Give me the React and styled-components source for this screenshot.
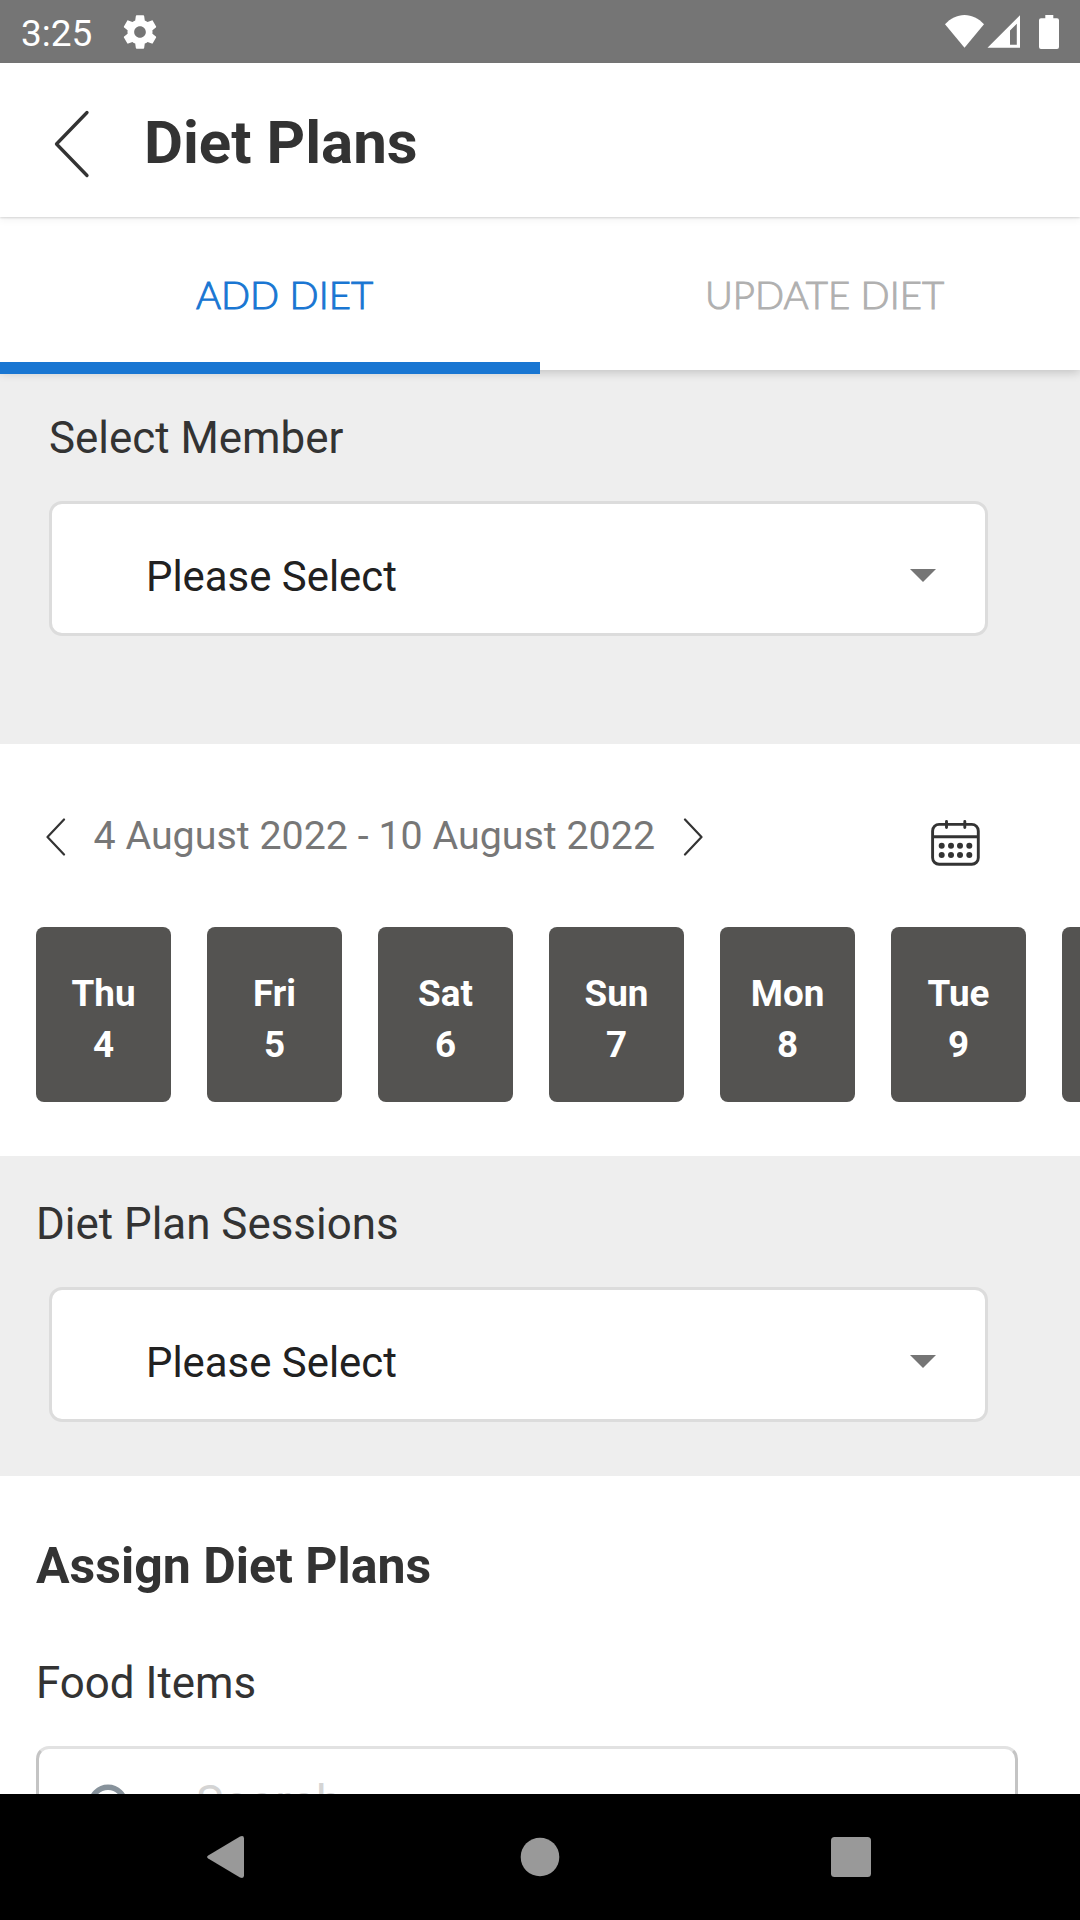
import styled, { createGlobalStyle } from "styled-components";

const days = [
	{ name: "Thu", date: 4 },
	{ name: "Fri", date: 5 },
	{ name: "Sat", date: 6 },
	{ name: "Sun", date: 7 },
	{ name: "Mon", date: 8 },
	{ name: "Tue", date: 9 },
	{ name: "Wed", date: 10 },
];

const dotColumns = [10.7, 20, 29, 38.3];
const dotRows = [25.7, 35];

const Select = () => (
	<SelectBox>
		<SelectText>Please Select</SelectText>
		<Arrow width="26" height="13" viewBox="0 0 26 13">
			<path d="M0 0h26L13 13z" fill="#757575" />
		</Arrow>
	</SelectBox>
);

const StatusIcons = () => (
	<svg width="116" height="36" viewBox="944 13 116 36" fill="#fff">
		<path d="M964.5 46.8 945 23.2C950.5 17.5 957 14 964.5 14S978.5 17.5 984 23.2z" />
		<path
			fillRule="evenodd"
			d="M987.5 46.8 1020 14.3V46.8zM1010 29.5V43.7H1016.8V22.7z"
		/>
		<path d="M1045.3 14h8v3.2h3.7a2 2 0 0 1 2 2V46a2 2 0 0 1-2 2h-16a2 2 0 0 1-2-2V19.2a2 2 0 0 1 2-2h4.3z" />
	</svg>
);

const CalendarIcon = () => (
	<svg width="49" height="47" viewBox="0 0 49 47" fill="none" stroke="#333" strokeWidth="2.9">
		<rect x="1.6" y="4.4" width="45.7" height="39.9" rx="6.5" />
		<path d="M1.6 16.7H47.3" />
		<path d="M15.5 1.5V7.5M33.8 1.5V7.5" strokeLinecap="round" />
		{dotRows.map((y) =>
			dotColumns.map((x) => (
				<circle key={`${x}-${y}`} cx={x} cy={y} r="3" fill="#333" stroke="none" />
			))
		)}
	</svg>
);

const App = () => {
	return (
		<Screen>
			<GlobalStyle />
			<StatusBar>
				<Clock>3:25</Clock>
				<svg width="40" height="40" viewBox="0 0 24 24" fill="#fff">
					<path d="M19.43 12.98c.04-.32.07-.64.07-.98s-.03-.66-.07-.98l2.11-1.65c.19-.15.24-.42.12-.64l-2-3.46c-.12-.22-.39-.3-.61-.22l-2.49 1c-.52-.4-1.08-.73-1.69-.98l-.38-2.65C14.46 2.18 14.25 2 14 2h-4c-.25 0-.46.18-.49.42l-.38 2.65c-.61.25-1.17.59-1.69.98l-2.49-1c-.23-.09-.49 0-.61.22l-2 3.46c-.13.22-.07.49.12.64l2.11 1.65c-.04.32-.07.65-.07.98s.03.66.07.98l-2.11 1.65c-.19.15-.24.42-.12.64l2 3.46c.12.22.39.3.61.22l2.49-1c.52.4 1.08.73 1.69.98l.38 2.65c.03.24.24.42.49.42h4c.25 0 .46-.18.49-.42l.38-2.65c.61-.25 1.17-.59 1.69-.98l2.49 1c.23.09.49 0 .61-.22l2-3.46c.12-.22.07-.49-.12-.64l-2.11-1.65zM12 15.5c-1.93 0-3.5-1.57-3.5-3.5s1.57-3.5 3.5-3.5 3.5 1.57 3.5 3.5-1.57 3.5-3.5 3.5z" />
				</svg>
				<StatusRight>
					<StatusIcons />
				</StatusRight>
			</StatusBar>

			<Header>
				<svg width="36" height="70" viewBox="0 0 36 70" fill="none" stroke="#333">
					<path d="M33 3.5 2.5 35 33 66.5" strokeWidth="3.3" strokeLinecap="round" strokeLinejoin="round" />
				</svg>
				<h1>Diet Plans</h1>
			</Header>

			<Tabs>
				<Tab $active>ADD DIET</Tab>
				<Tab>UPDATE DIET</Tab>
			</Tabs>

			<Content>
				<GraySection $bottom={108}>
					<Label $indent={49}>Select Member</Label>
					<Select />
				</GraySection>

				<WeekSection>
					<DateRow>
						<Chevron width="21" height="38" viewBox="0 0 21 38">
							<path d="M19 1.5 2.5 19 19 36.5" />
						</Chevron>
						<DateRange>4 August 2022 - 10 August 2022</DateRange>
						<Chevron width="21" height="38" viewBox="0 0 21 38">
							<path d="M2 1.5 18.5 19 2 36.5" />
						</Chevron>
						<CalendarButton>
							<CalendarIcon />
						</CalendarButton>
					</DateRow>
					<DayList>
						{days.map((day) => (
							<Day key={day.date}>
								<span>{day.name}</span>
								<span>{day.date}</span>
							</Day>
						))}
					</DayList>
				</WeekSection>

				<GraySection $bottom={54}>
					<Label $indent={36}>Diet Plan Sessions</Label>
					<Select />
				</GraySection>

				<AssignSection>
					<h2>Assign Diet Plans</h2>
					<Label $indent={36}>Food Items</Label>
					<SearchBox>
						<svg width="50" height="50" viewBox="0 0 50 50" fill="none" stroke="#87929b" strokeWidth="5.6">
							<circle cx="20" cy="20" r="16.8" />
							<path d="M32 32 46 46" />
						</svg>
						<span>Search</span>
					</SearchBox>
				</AssignSection>
			</Content>

			<NavBar>
				<svg width="44" height="44" viewBox="0 0 44 44">
					<path d="M1.2 20.5 33 1.5Q37 0 37 3.5V40.5Q37 44 33 42.5L1.2 23.5Q-1 22 1.2 20.5z" />
				</svg>
				<svg width="40" height="40" viewBox="0 0 40 40">
					<circle cx="20" cy="20" r="19.3" />
				</svg>
				<svg width="40" height="40" viewBox="0 0 40 40">
					<rect width="40" height="40" rx="3.5" />
				</svg>
			</NavBar>
		</Screen>
	);
};

export default App;

const GlobalStyle = createGlobalStyle`
	* {
		box-sizing: border-box;
	}
	body {
		margin: 0;
		font-family: Roboto, sans-serif;
		color: #333;
		background: #fff;
	}
	h1, h2 {
		margin: 0;
		font-weight: 700;
	}
	svg {
		display: block;
		flex-shrink: 0;
	}
`;

const Screen = styled.div`
	display: flex;
	flex-direction: column;
	width: 1080px;
	height: 1920px;
	overflow: hidden;
`;

const StatusBar = styled.div`
	display: flex;
	align-items: center;
	flex-shrink: 0;
	height: 63px;
	padding: 0 20px 0 21px;
	background: #757575;
`;

const Clock = styled.span`
	width: 99px;
	padding-top: 3px;
	font-size: 37px;
	line-height: 43px;
	color: #fff;
`;

const StatusRight = styled.div`
	margin-left: auto;
`;

const Header = styled.header`
	display: flex;
	align-items: center;
	flex-shrink: 0;
	gap: 54px;
	height: 154px;
	padding: 8px 0 0 54px;
	background: #fff;
	box-shadow: 0 1px 2px rgba(0, 0, 0, 0.14), 0 3px 8px rgba(0, 0, 0, 0.05);
	z-index: 2;

	h1 {
		margin-top: -3px;
		font-size: 60px;
		line-height: 71px;
	}
`;

const Tabs = styled.nav`
	display: flex;
	flex-shrink: 0;
	height: 153px;
	background: #fff;
	box-shadow: 0 2px 10px rgba(0, 0, 0, 0.2);
	z-index: 1;
`;

const Tab = styled.div`
	flex: 1;
	height: 157px;
	padding: 54px 0 0 29px;
	font-family: Lato, sans-serif;
	font-size: 38.3px;
	font-weight: 300;
	line-height: 46px;
	text-align: center;
	color: ${({ $active }) => ($active ? "#1976d2" : "#b0b0b0")};
	-webkit-text-stroke: 1px currentColor;
	border-bottom: 12px solid ${({ $active }) => ($active ? "#1976d2" : "transparent")};
`;

const Content = styled.main`
	flex: 1;
	min-height: 0;
	overflow: hidden;
`;

const GraySection = styled.section`
	padding: 42px 0 ${({ $bottom }) => $bottom}px;
	background: #eee;
`;

const Label = styled.div`
	padding-left: ${({ $indent }) => $indent}px;
	font-size: 43.9px;
	line-height: 52px;
`;

const SelectBox = styled.div`
	display: flex;
	align-items: flex-start;
	justify-content: space-between;
	width: 939px;
	height: 135px;
	margin: 37px 0 0 49px;
	padding: 0 49px 0 94px;
	background: #fff;
	border: 3px solid #dcdcdc;
	border-radius: 13px;
`;

const SelectText = styled.span`
	margin-top: 48px;
	font-size: 41.9px;
	line-height: 49px;
	color: #212121;
`;

const Arrow = styled.svg`
	margin-top: 65px;
`;

const WeekSection = styled.section`
	padding: 68px 0 54px;
	background: #fff;
`;

const DateRow = styled.div`
	display: flex;
	align-items: flex-start;
	height: 115px;
	padding: 0 100.5px 0 44.5px;
`;

const Chevron = styled.svg`
	margin-top: 6px;
	fill: none;
	stroke: #333;
	stroke-width: 2.2;
	stroke-linecap: round;
	stroke-linejoin: round;
`;

const DateRange = styled.span`
	margin: 0 28px;
	font-size: 39.4px;
	line-height: 47px;
	color: #777;
	white-space: nowrap;
`;

const CalendarButton = styled.div`
	margin: 8px 0 0 auto;
`;

const DayList = styled.div`
	display: flex;
	gap: 36px;
	padding-left: 36px;
	overflow: hidden;
`;

const Day = styled.div`
	display: flex;
	flex-direction: column;
	align-items: center;
	flex-shrink: 0;
	width: 135px;
	height: 175px;
	padding-top: 41px;
	font-size: 36.8px;
	font-weight: 700;
	line-height: 51px;
	color: #fff;
	background: #545351;
	border-radius: 8px;
`;

const AssignSection = styled.section`
	padding-top: 61px;
	background: #fff;

	h2 {
		margin: 0 0 62px 36px;
		font-size: 50px;
		line-height: 58px;
	}
`;

const SearchBox = styled.div`
	display: flex;
	align-items: flex-start;
	gap: 58px;
	width: 982px;
	height: 135px;
	margin: 37px 0 0 36px;
	padding: 35px 0 0 49px;
	border: 3px solid #c4c4c4;
	border-top-color: #e2e2e2;
	border-radius: 13px;

	span {
		margin-top: -9px;
		font-size: 46px;
		line-height: 54px;
		letter-spacing: 0.8px;
		color: #d4d4d4;
	}
`;

const NavBar = styled.div`
	display: grid;
	grid-template-columns: repeat(3, 311px);
	justify-content: center;
	align-items: center;
	justify-items: center;
	flex-shrink: 0;
	height: 126px;
	background: #000;
	fill: #999;
	z-index: 1;
`;
